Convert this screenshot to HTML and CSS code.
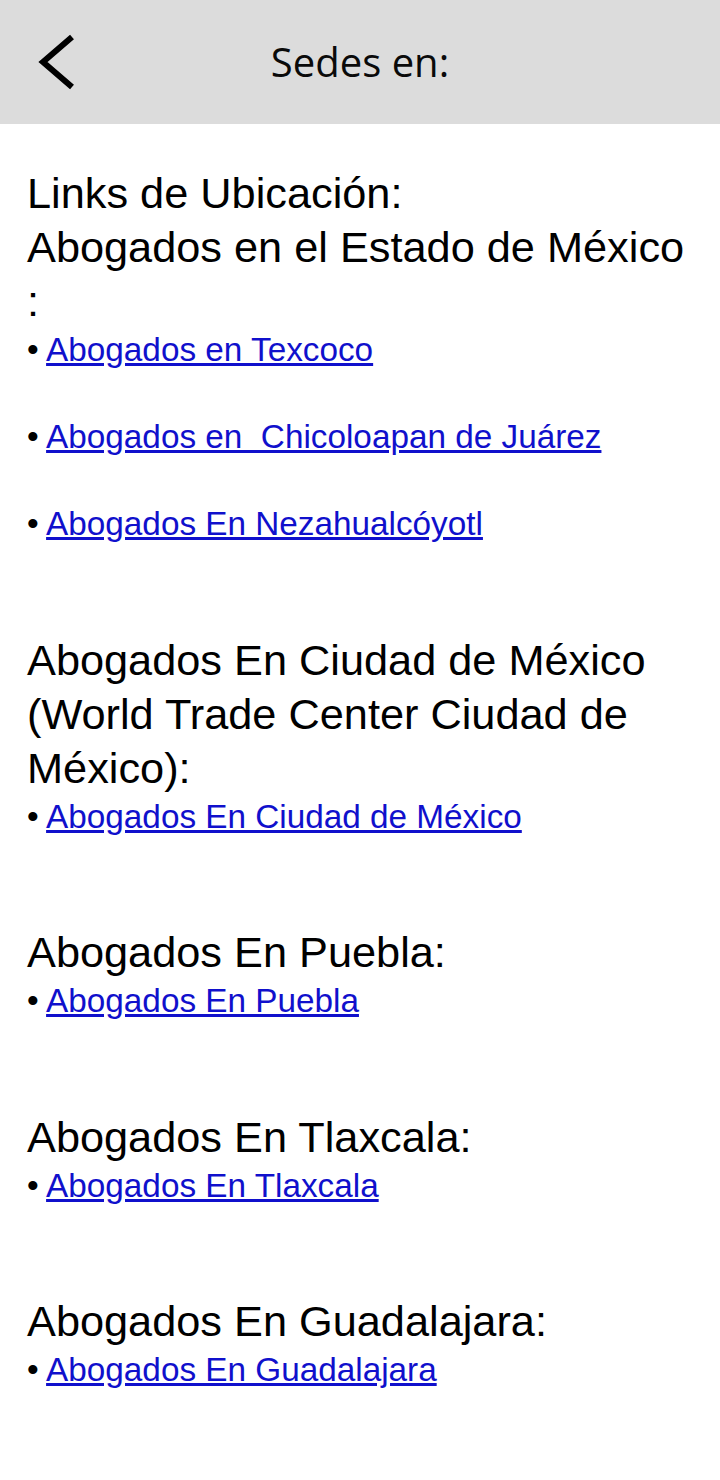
FILE: index.html
```html
<!DOCTYPE html>
<html lang="es">
<head>
<meta charset="utf-8">
<title>Sedes en:</title>
<link rel="stylesheet" href="styles.css">
</head>
<body>
<header class="topbar">
  <div class="back">
    <svg class="back-icon" width="44" height="60" viewBox="0 0 44 60" aria-hidden="true">
      <polyline points="36,5 7,30 36,55" fill="none" stroke="#000" stroke-width="6" stroke-linecap="butt" stroke-linejoin="miter"/>
    </svg>
  </div>
  <h1 class="title">Sedes en:</h1>
  <div></div>
</header>
<main class="content">
  <section class="group">
    <p class="heading">Links de Ubicación:<br>Abogados en el Estado de México :</p>
    <p class="item">• <a href="#">Abogados en Texcoco</a></p>
    <p class="item spaced">• <a href="#">Abogados en &nbsp;Chicoloapan de Juárez</a></p>
    <p class="item spaced">• <a href="#">Abogados En Nezahualcóyotl</a></p>
  </section>
  <section class="group">
    <p class="heading">Abogados En Ciudad de México (World Trade Center Ciudad de México):</p>
    <p class="item">• <a href="#">Abogados En Ciudad de México</a></p>
  </section>
  <section class="group">
    <p class="heading">Abogados En Puebla:</p>
    <p class="item">• <a href="#">Abogados En Puebla</a></p>
  </section>
  <section class="group">
    <p class="heading">Abogados En Tlaxcala:</p>
    <p class="item">• <a href="#">Abogados En Tlaxcala</a></p>
  </section>
  <section class="group">
    <p class="heading">Abogados En Guadalajara:</p>
    <p class="item">• <a href="#">Abogados En Guadalajara</a></p>
  </section>
</main>
</body>
</html>
```
FILE: styles.css
```css
html, body {
  margin: 0;
  padding: 0;
  background: #ffffff;
}
body {
  font-family: "Liberation Sans", Arial, sans-serif;
  color: #000;
}
.topbar {
  height: 124px;
  background: #dcdcdc;
  display: grid;
  grid-template-columns: 1fr auto 1fr;
  align-items: center;
}
.back {
  padding-left: 36px;
  display: flex;
  align-items: center;
}
.back-icon {
  display: block;
}
.title {
  margin: 0;
  font-family: "Open Sans", "Noto Sans", sans-serif;
  font-weight: 400;
  font-size: 40px;
  color: #0a0a0a;
  line-height: 1;
}
.content {
  padding: 42px 27px 60px 27px;
  display: flex;
  flex-direction: column;
  gap: 87px;
}
.group {
  display: flex;
  flex-direction: column;
}
.heading {
  margin: 0;
  font-size: 43.3px;
  line-height: 54px;
}
.item {
  margin: 0;
  font-size: 33.3px;
  line-height: 43.5px;
}
.item.spaced {
  margin-top: 43.5px;
}
.item a {
  color: #1010cc;
  text-decoration: underline;
}
```
